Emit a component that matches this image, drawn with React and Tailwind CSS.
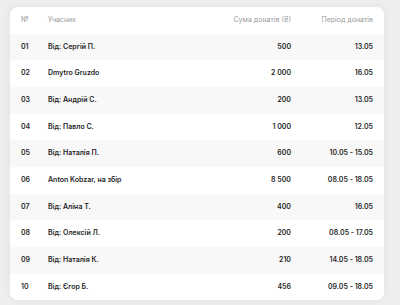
import React from "react";

const rows = [
  ["01", "Від: Сергій П.", "500", "13.05"],
  ["02", "Dmytro Gruzdo", "2 000", "16.05"],
  ["03", "Від: Андрій С.", "200", "13.05"],
  ["04", "Від: Павло С.", "1 000", "12.05"],
  ["05", "Від: Наталія П.", "600", "10.05 - 15.05"],
  ["06", "Anton Kobzar, на збір", "8 500", "08.05 - 18.05"],
  ["07", "Від: Аліна Т.", "400", "16.05"],
  ["08", "Від: Олексій Л.", "200", "08.05 - 17.05"],
  ["09", "Від: Наталія К.", "210", "14.05 - 18.05"],
  ["10", "Від: Єгор Б.", "456", "09.05 - 18.05"],
];

export default function App() {
  return (
    <div className="w-[400px] h-[305px] bg-[#eeeeee] overflow-hidden pt-[7px] pl-[10px]" style={{ fontFamily: "Inter, 'Noto Sans', sans-serif" }}>
      <div className="w-[374px] bg-white rounded-[8px] shadow-[0_0_8px_rgba(0,0,0,0.06)] overflow-hidden">
        <div className="grid grid-cols-[27px_123px_120px_82px] px-[11px] h-[26.67px] items-center text-[7px] text-[#9a9a9a]">
          <div>№</div>
          <div>Учасник</div>
          <div className="text-right">Сума донатів (₴)</div>
          <div className="text-right">Період донатів</div>
        </div>
        {rows.map((r, i) => (
          <div
            key={r[0]}
            className={`grid grid-cols-[27px_123px_120px_82px] px-[11px] h-[26.67px] items-center text-[7px] font-semibold text-[#1f1f1f] ${i % 2 === 0 ? "bg-[#f8f8f8]" : "bg-white"}`}
          >
            <div>{r[0]}</div>
            <div className="whitespace-nowrap">{r[1]}</div>
            <div className="text-right">{r[2]}</div>
            <div className="text-right">{r[3]}</div>
          </div>
        ))}
      </div>
    </div>
  );
}
